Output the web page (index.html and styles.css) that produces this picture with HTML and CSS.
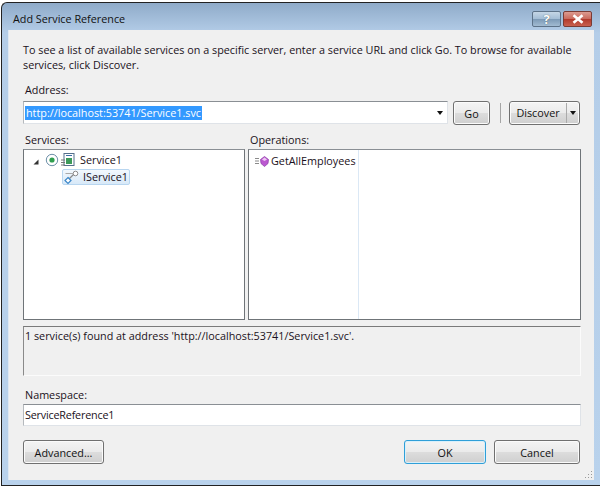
FILE: index.html
```html
<!DOCTYPE html>
<html lang="en">
<head>
<meta charset="utf-8">
<title>Add Service Reference</title>
<link rel="stylesheet" href="styles.css">
</head>
<body>
<div class="window">
  <div class="titlebar">
    <span class="title">Add Service Reference</span>
    <div class="caption">
      <div class="cap cap-help">?</div>
      <div class="cap cap-close">
        <svg width="14" height="10" viewBox="0 0 14 10"><path d="M2.500 1.200 L11.500 8.800 M11.500 1.200 L2.500 8.800" stroke="#fff" stroke-width="2.600" fill="none"/></svg>
      </div>
    </div>
  </div>
  <div class="client">
    <p class="intro">To see a list of available services on a specific server, enter a service URL and click Go. To browse for available services, click Discover.</p>
    <div class="label label-address">Address:</div>
    <div class="address-row">
      <div class="combo">
        <span class="selected">http://localhost:53741/Service1.svc</span>
        <span class="arrow"></span>
      </div>
      <div class="btn btn-go">Go</div>
      <div class="sep"></div>
      <div class="btn btn-split">
        <span class="split-main">Discover</span>
        <span class="split-arrow"><span class="arrow"></span></span>
      </div>
    </div>
    <div class="pane-labels">
      <div class="label pane-label-left">Services:</div>
      <div class="label">Operations:</div>
    </div>
    <div class="panes">
      <div class="pane pane-services">
        <div class="tree-row">
          <svg class="expander" width="6" height="6" viewBox="0 0 6 6"><path d="M5.500 .5 V5.500 H.5 Z" fill="#333"/></svg>
          <svg class="radio" width="14" height="14" viewBox="0 0 14 14"><circle cx="7" cy="7" r="5.700" fill="#fff" stroke="#6d8fa8"/><circle cx="7" cy="7" r="2.600" fill="#2f9e4f"/></svg>
          <svg class="svc-icon" width="16" height="16" viewBox="0 0 16 16"><rect x="4" y="1.500" width="10" height="12" fill="#fff" stroke="#55708c"/><rect x="6" y="6" width="6" height="6" fill="#3c9a5a"/><path d="M6 3.500h6" stroke="#3a6ea5"/><path d="M1 8h4M1 10.500h4M1 13h4" stroke="#777"/></svg>
          <span class="tree-text">Service1</span>
        </div>
        <div class="tree-row tree-row-child">
          <div class="tree-selected">
            <svg class="iface-icon" width="17" height="15" viewBox="0 0 17 15"><circle cx="11.500" cy="3.500" r="2.300" fill="#fff" stroke="#8a8a8a"/><path d="M9.500 4.500 L5 9" stroke="#8a8a8a" stroke-width="1.200"/><path d="M1.500 3.500 H9" stroke="#a9a9a9"/><path d="M4 7.500 L7 10.500 L4 13.500 L1 10.500 Z" fill="#fff" stroke="#3a86c8" stroke-width="1.200"/></svg>
            <span class="tree-text">IService1</span>
          </div>
        </div>
      </div>
      <div class="pane pane-ops">
        <div class="ops-col">
          <div class="op-row">
            <svg class="op-icon" width="15" height="13" viewBox="0 0 15 13"><path d="M0 3.500h4M0 6h4M0 8.500h4" stroke="#8a8a8a"/><path d="M9.500 1.500 L13.500 4.500 L13 8.500 L9.500 11.500 L6 8.500 L5.500 4.500 Z" fill="#bb58d0" stroke="#8a3aa6" stroke-width=".7"/><path d="M9.500 2.500 L12 4.500 L9.500 6 L7 4.500 Z" fill="#efc8f5"/></svg>
            <span class="tree-text">GetAllEmployees</span>
          </div>
        </div>
      </div>
    </div>
    <div class="status">1 service(s) found at address 'http://localhost:53741/Service1.svc'.</div>
    <div class="label label-ns">Namespace:</div>
    <div class="ns-input">ServiceReference1</div>
    <div class="footer">
      <div class="btn btn-advanced">Advanced...</div>
      <div class="footer-right">
        <div class="btn btn-ok">OK</div>
        <div class="btn btn-cancel">Cancel</div>
      </div>
    </div>
    <svg class="grip" width="9" height="9" viewBox="0 0 9 9"><path d="M7 1h1v1H7zM4 4h1v1H4zM7 4h1v1H7zM1 7h1v1H1zM4 7h1v1H4zM7 7h1v1H7z" fill="#9a9a9a"/></svg>
  </div>
</div>
</body>
</html>
```
FILE: styles.css
```css
* { box-sizing: border-box; }
html, body { margin: 0; height: 100%; }
body {
  width: 600px;
  height: 487px;
  background: #fff;
  padding: 2px 0 0 1px;
  font-family: "Open Sans", "Noto Sans", sans-serif;
  font-size: 10.800px;
  color: #1a1a1a;
  overflow: hidden;
}
.window {
  height: 484px;
  border: 1px solid #222;
  border-right: 0;
  border-radius: 6px 0 0 0;
  background: linear-gradient(180deg, #8fabc9 0, #b4cde8 30px, #b9d2ec 100%);
  padding: 0 6px 5px 6px;
  display: flex;
  flex-direction: column;
}
.titlebar {
  height: 27px;
  flex: none;
  display: flex;
  align-items: flex-start;
  justify-content: space-between;
  padding-left: 5px;
}
.title { font-size: 10.800px; line-height: 15px; margin-top: 8px; color: #111; }
.caption { display: flex; gap: 2px; margin-top: 8px; margin-right: 2px; }
.cap {
  width: 29px;
  height: 16px;
  border: 1px solid #5d7288;
  border-radius: 2px;
  display: flex;
  align-items: center;
  justify-content: center;
}
.cap-help {
  background: linear-gradient(180deg, #c5d6e6 0, #a3bdd5 50%, #7d9ab6 52%, #a2bbd2 100%);
  color: #fff;
  font-size: 13px;
  font-weight: 700;
  text-shadow: 0 0 1px #344;
}
.cap-close {
  background: linear-gradient(180deg, #dc9b90 0, #c9685b 50%, #b23a2c 52%, #c8604f 100%);
  border-color: #7a3b34;
}
.client {
  position: relative;
  flex: 1;
  background: #f0f0f0;
  border-left: 1px solid #dfe8f2;
  padding: 12px 13px 0 14px;
}
.intro { margin: 0; line-height: 15px; height: 30px; color: #1a1020; }
.label { line-height: 14px; color: #1a1020; padding-left: 2px; }
.label-address { margin-top: 11px; }
.address-row { display: flex; margin-top: 4px; height: 23px; }
.combo {
  width: 425px;
  height: 23px;
  background: #fff;
  border: 1px solid #dfe3e8;
  border-top-color: #8a8f94;
  border-left-color: #b5b9bd;
  display: flex;
  align-items: center;
  justify-content: space-between;
  padding: 0 4px 0 1px;
}
.selected { background: #3399ff; color: #fff; line-height: 14px; padding: 0 1px; }
.arrow {
  width: 0;
  height: 0;
  border-left: 3.500px solid transparent;
  border-right: 3.500px solid transparent;
  border-top: 4px solid #111;
  display: block;
}
.btn {
  border: 1px solid #707070;
  border-radius: 3px;
  background: linear-gradient(180deg, #f4f4f4 0, #ebebeb 48%, #dcdcdc 52%, #cfcfcf 100%);
  box-shadow: inset 0 0 0 1px #fbfbfb;
  display: flex;
  align-items: center;
  justify-content: center;
  color: #111;
  height: 24px;
}
.btn-go { width: 37px; margin-left: 5px; }
.sep { width: 1px; height: 20px; background: #a5a5a5; margin: 2px 8px 0 10px; }
.btn-split { width: 71px; justify-content: flex-start; }
.split-main { width: 57px; text-align: center; border-right: 1px solid #aaa; line-height: 20px; flex: none; }
.split-arrow { flex: 1; display: flex; justify-content: center; }
.pane-labels { display: flex; margin-top: 9px; height: 15px; }
.pane-label-left { width: 225px; }
.panes { display: flex; gap: 3px; height: 171px; margin-top: 1px; }
.pane {
  background: #fff;
  border: 1px solid #6f7478;
  border-top-color: #8a8f94;
}
.pane-services { width: 222px; padding-top: 2px; }
.pane-ops { width: 333px; }
.tree-row { display: flex; align-items: center; height: 16px; padding-left: 9px; }
.expander { margin-right: 6px; margin-top: 3px; }
.radio { margin-right: 1px; }
.svc-icon { margin-right: 4px; }
.tree-text { color: #1a1020; line-height: 14px; white-space: nowrap; }
.tree-row-child { height: 16px; padding-left: 38px; margin-top: 1px; }
.tree-selected {
  display: flex;
  align-items: center;
  height: 16px;
  width: 68px;
  border: 1px solid #b8d6f0;
  border-radius: 2px;
  background: linear-gradient(180deg, #f2f8fd, #d8e9f8);
  padding-left: 1px;
}
.iface-icon { margin-right: 2px; }
.ops-col { width: 110px; height: 100%; border-right: 1px solid #dbe8f5; padding-top: 4px; }
.op-row { display: flex; align-items: center; height: 14px; padding-left: 6px; width: 120px; }
.op-icon { margin-right: 1px; }
.status {
  margin-top: 6px;
  height: 50px;
  border: 1px solid #fbfbfb;
  border-top-color: #7a7a7a;
  border-left-color: #8a8a8a;
  padding: 2px 1px;
  line-height: 14px;
  color: #1a1020;
}
.label-ns { margin-top: 12px; height: 14px; }
.ns-input {
  margin-top: 2px;
  height: 22px;
  background: #fff;
  border: 1px solid #dfe3e8;
  border-top-color: #8a8f94;
  border-left-color: #b5b9bd;
  padding: 0 1px;
  line-height: 20px;
  color: #1a1020;
  letter-spacing: -0.2px;
}
.footer { display: flex; justify-content: space-between; margin-top: 14px; }
.footer-right { display: flex; gap: 8px; margin-right: 1px; }
.btn-advanced { width: 81px; }
.btn-ok {
  width: 82px;
  border-color: #2f9fd8;
  box-shadow: inset 0 0 0 1px #d9f0fb;
}
.btn-cancel { width: 86px; }
.grip { position: absolute; right: 1px; bottom: 1px; }
```
